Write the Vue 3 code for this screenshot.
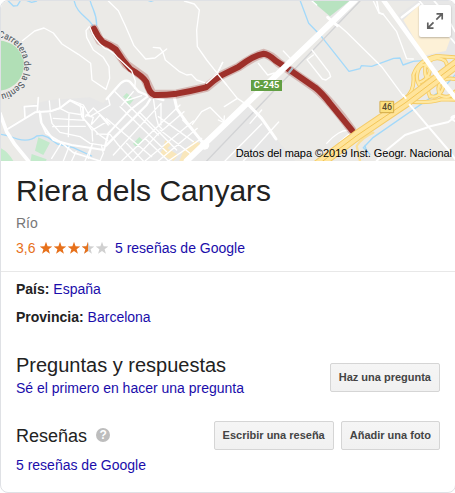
<script setup>
const starPath = 'M7 .8 8.6 5.3 13.3 5.4 9.6 8.3 10.9 12.8 7 10.1 3.1 12.8 4.4 8.3 .7 5.4 5.4 5.3Z'
const stars = [1, 1, 1, 0.5, 0]
const facts = [
  { label: 'País', value: 'España' },
  { label: 'Provincia', value: 'Barcelona' },
]
</script>

<template>
  <article class="card">
    <div class="map">
      <svg class="tiles" viewBox="0 0 1365 483" width="455" height="161" fill="none" stroke-linecap="round" stroke-linejoin="round">
        <rect width="1365" height="483" fill="#ebeae7" />
        <!-- built-up areas -->
        <g fill="#e7e7e7">
          <path d="M0 395 75 350 65 320 150 300 270 292 310 310 350 270 375 240 410 275 460 290 525 292 535 340 615 435 560 483H90L20 410Z" />
          <path d="M745 315 830 418 885 483H560L615 435Z" />
          <path d="M1195 45 1257 0H1365V165L1270 180Z" />
          <path d="M1015 75 935 0H1070Z" />
        </g>
        <path d="M0 122C40 125 70 155 72 190C74 232 42 268 0 272Z" fill="#b1dfb6" />
        <path d="M932 0H1052L990 49Z" fill="#b8e3c0" />
        <path d="M115 412 150 428 130 465 105 452ZM95 462 140 478 138 483H92ZM380 279 391 288 381 300 369 290ZM391 289 401 299 388 315 376 303ZM418 411 428 421 408 441 399 431ZM0 443Q25 455 40 483H0Z" fill="#c3eacb" />
        <path d="M1210 60 1257 15 1353 110 1338 152 1273 167Z" fill="#fdf1d7" />
        <path d="M495 421 515 433 502 445 535 465 520 483 480 462 490 443ZM585 422 610 435 560 483H538L550 453Z" fill="#f9e7bc" />

        <!-- streams -->
        <g stroke="#a3d9fa" stroke-width="4">
          <path d="M222 0C229 43 269 53 280 80M270 0C277 30 290 38 290 75" />
          <path d="M25 3 40 18 52 17 60 4M81 2 95 7 110 3M440 0 453 4 465 0" />
          <path d="M3 403 28 408Q82 433 110 408L127 406 144 412 172 432 220 443 275 468" />
          <path d="M901 3 926 70 964 109 1047 214 1080 206 1084 197 1115 199 1181 175 1200 174 1209 195 1240 184 1275 181M1365 225 1325 270 1120 412 1090 443 1110 463M1095 436 1100 455" />
        </g>

        <!-- railway -->
        <path d="M1080 3 620 483" stroke="#d2d3d5" stroke-width="4" />

        <!-- minor streets -->
        <g stroke="#fff" stroke-width="4">
          <path d="M67 122 104 93 132 84 160 99 186 132 235 163 272 190 276 240 318 268 329 235 327 200 310 172 280 150 260 112 258 92 268 80" />
          <path d="M325 3 355 32 375 75 402 137 437 177 465 174 500 147M460 142 480 144 489 157 496 180 539 215 560 225 574 223 590 240 620 250 640 242 668 187" />
          <path d="M553 3 583 12 598 30 590 90 592 140 620 180 652 220 712 295 739 313M650 220 620 250M712 295 673 320M850 153 880 185M1015 75 1040 97 1145 200 1215 295M933 0 950 15M1120 3 1137 39 1150 43 1190 95 1220 176 1240 177" />
          <path d="M775 190 803 225 823 219M940 165 921 179 967 237 978 240 992 230 988 218 936 150M577 373 605 335 630 322 672 364 673 348M672 368 655 360" />
          <path d="M115 293 112 333M118 333 122 365 138 400 180 425 220 458 300 483M75 353 73 320 112 317" stroke-width="5" />
          <path d="M148 303 151 335 180 325 212 300 250 315 270 350 330 315 325 294M150 340 156 370 180 397 240 410 270 430 315 437M178 297 180 325 205 338 250 345M160 355 205 358 255 361 276 391 326 362M158 380 175 379 256 379M207 342 205 410M240 310 245 350 295 402 323 422M276 391 278 423M256 350 280 324 330 372M258 345 280 352 274 372M275 373 300 345 325 375M290 402 330 403M255 483 277 432M330 403 355 435 400 483M304 435 310 460 300 483M278 430 265 475M185 427 155 475M207 440 190 483M228 455 215 483" />
          <path d="M345 275 475 405M400 275 365 316M320 356 350 382 400 424 455 470M376 303 425 287M340 465 483 310M365 483 540 315M398 483 475 401 552 335M435 483 580 363M475 483 592 385M505 483 605 415M475 350 580 425M480 390 570 460M435 415 505 483M548 360 595 410M380 430 430 483M420 338 530 450M360 320 500 455M460 295 468 350 475 375 487 388M483 310 483 375" />
          <path d="M836 366 730 483M785 330 750 370M785 372 675 483M1050 392C1030 385 1000 407 980 430M1020 425 1055 396" />
        </g>
        <g stroke="#fff">
          <path d="M0 340 20 395 45 434 85 483" stroke-width="11" />
          <path d="M18 390 105 337 150 334 180 324 210 301 249 322 250 358M120 335 125 370 160 420 215 435 312 450 325 400 353 370 390 330 442 290" stroke-width="6" />
          <path d="M320 297 355 257Q374 235 390 245L416 275 446 288 490 300M318 437 440 315 455 290 523 291" stroke-width="7" />
          <path d="M523 292 531 327 558 365 614 435M742 311 785 355 828 417" stroke-width="9" />
        </g>

        <!-- river highlight -->
        <g stroke="#9c2f29">
          <path d="M282 86 300 122 345 145 379 194 433 233 457 283 530 282 620 262 664 226 715 201Q762 168 791 160Q813 165 835 188L865 208 946 264Q990 301 1056 391" stroke-opacity=".27" stroke-width="27" />
          <path d="M282 86Q293 111 309 127Q333 137 348 149Q365 179 391 207Q428 228 439 246Q447 279 463 285Q492 286 530 281Q575 273 618 262Q641 240 664 226L715 201Q762 165 791 161Q804 161 827 182L865 207 946 263Q967 280 990 310L1056 391" stroke="#9e302a" stroke-width="18" />
        </g>
        <path d="M270 82Q281 119 314 145Q332 148 355 175L395 212 406 243 404 265M620 250 652 221 668 187M652 221 680 255" stroke="#fff" stroke-width="4" />
        <path d="M866 219 878 204" stroke="#a9bbc7" stroke-width="7" stroke-linecap="butt" />

        <!-- main roads -->
        <path d="M1065 0 560 483" stroke="#fff" stroke-width="18" />
        <circle cx="614" cy="435" r="14" fill="#fff" />
        <path d="M983 52 1012 77" stroke="#fff" stroke-width="9" />
        <path d="M1130 0 1137 38 1150 43M1256 0 1365 130M1300 0 1335 40 1365 95" stroke="#fff" stroke-width="5" />
        <path d="M1205 52 1257 12" stroke="#fff" stroke-width="7" />

        <g stroke="#f5ca61" stroke-width="12">
          <path d="M1215 295Q1245 275 1240 225Q1255 180 1310 168L1365 172M1262 260C1242 238 1252 195 1274 194C1302 202 1287 237 1260 247M1280 235C1260 187 1305 162 1335 182C1358 215 1315 238 1288 232M1220 305Q1285 310 1325 298L1365 299M1290 290C1275 260 1292 232 1318 238C1345 252 1320 297 1295 289M1320 286C1305 250 1328 231 1365 237M1325 288Q1350 297 1365 275" />
        </g>
        <g stroke="#ffe8a2" stroke-width="7">
          <path d="M1215 295Q1245 275 1240 225Q1255 180 1310 168L1365 172M1262 260C1242 238 1252 195 1274 194C1302 202 1287 237 1260 247M1280 235C1260 187 1305 162 1335 182C1358 215 1315 238 1288 232M1220 305Q1285 310 1325 298L1365 299M1290 290C1275 260 1292 232 1318 238C1345 252 1320 297 1295 289M1320 286C1305 250 1328 231 1365 237M1325 288Q1350 297 1365 275" />
        </g>
        <path d="M1120 398Q1085 413 1070 438L1080 483" stroke="#fae09a" stroke-width="7" />
        <path d="M950 497 1070 407 1215 309 1375 188" stroke="#f5cc68" stroke-width="32" />
        <path d="M950 497 1070 407 1215 309 1375 188" stroke="#ffe49b" stroke-width="26" />
        <path d="M950 497 1070 407 1215 309 1375 188" stroke="#f3c556" stroke-width="3" />
        <path d="M1150 0 1310 223M1315 230 1365 292" stroke="#fff" stroke-width="14" />
        <path d="M1210 285 1217 294M1229 314 1285 380 1345 450 1370 483M1285 380 1345 366 1365 350M1286 381 1215 405 1160 450 1130 483M1365 347Q1343 352 1365 363" stroke="#fff" stroke-width="6" />

        <!-- road shields -->
        <rect x="753" y="240" width="93" height="33" fill="#629f43" />
        <text class="shield" x="761" y="265" fill="#fff" font-size="27" font-weight="700" textLength="77" lengthAdjust="spacingAndGlyphs">C-245</text>
        <rect x="1141" y="304" width="40" height="34" fill="#fce07e" stroke="#d4aa48" stroke-width="3" />
        <text class="shield" x="1146" y="331" fill="#594b31" font-size="27" font-weight="500" textLength="30" lengthAdjust="spacingAndGlyphs">46</text>

        <path id="street" d="M-6 112C40 119 72 154 72 199C72 244 42 276 -10 286" />
        <text class="street" font-size="29" font-weight="500"><textPath href="#street" textLength="246" lengthAdjust="spacingAndGlyphs">Carretera de la Sentiu</textPath></text>
      </svg>
      <span class="credit">Datos del mapa ©2019 Inst. Geogr. Nacional</span>
      <button class="expand" type="button" aria-label="Ampliar mapa">
        <svg viewBox="0 0 32 32" width="32" height="32" fill="none" stroke="#616161" stroke-width="1.7">
          <path d="M17.5 8.8H23.2V14.5M22.8 9.2 17.3 14.7M14.5 17.3 9 22.8M8.8 17.5V23.2H14.5" />
        </svg>
      </button>
    </div>

    <header class="head">
      <h1>Riera dels Canyars</h1>
      <div class="kind">Río</div>
      <div class="rating">
        <span class="score">3,6</span>
        <span class="stars">
          <svg v-for="(fill, i) in stars" :key="i" viewBox="0 0 14 14" width="14" height="14">
            <path :d="starPath" :fill="fill === 1 ? '#e7711b' : '#d0d0d0'" />
            <path v-if="fill === 0.5" d="M7 .8V10.1L3.1 12.8 4.4 8.3 .7 5.4 5.4 5.3Z" fill="#e7711b" />
          </svg>
        </span>
        <a>5 reseñas de Google</a>
      </div>
    </header>

    <section class="facts">
      <div v-for="fact in facts" :key="fact.label"><b>{{ fact.label }}:</b> <a>{{ fact.value }}</a></div>
    </section>

    <section class="row questions">
      <div>
        <h2>Preguntas y respuestas</h2>
        <a>Sé el primero en hacer una pregunta</a>
      </div>
      <button class="btn" type="button">Haz una pregunta</button>
    </section>

    <section class="row reviews">
      <div class="heading">
        <h2>Reseñas</h2>
        <span class="help">?</span>
      </div>
      <div class="actions">
        <button class="btn" type="button">Escribir una reseña</button>
        <button class="btn" type="button">Añadir una foto</button>
      </div>
    </section>
    <a class="all">5 reseñas de Google</a>
  </article>
</template>

<style>
body { background: #fff; overflow: hidden; }
</style>

<style scoped>
.card {
  box-sizing: border-box;
  width: 456px;
  height: 493px;
  border: 1px solid #dfe1e5;
  border-radius: 8px;
  overflow: hidden;
  background: #fff;
  color: #222;
  font: 14px/18px "Liberation Sans", Arial, sans-serif;
}
a { color: #1a0dab; }
h1, h2 { margin: 0; font-weight: 400; }
.map { position: relative; height: 160px; overflow: hidden; }
.tiles { display: block; margin: -1px 0 0 -1px; }
.shield, .street { font-family: Roboto, sans-serif; }
.street { fill: #62676c; stroke: #f4f5f3; stroke-width: 3px; paint-order: stroke; }
.credit { position: absolute; right: 3px; bottom: 1px; color: #000; font-size: 11px; line-height: 14px; letter-spacing: -.05px; white-space: nowrap; }
.expand {
  position: absolute;
  top: 4px;
  right: 4px;
  width: 32px;
  height: 32px;
  padding: 0;
  border: 0;
  border-radius: 2px;
  background: #fff;
  box-shadow: 0 1px 2px rgba(0, 0, 0, .25);
}
.expand svg { display: block; }
.head { box-sizing: border-box; height: 111px; padding: 12px 15px 0; border-bottom: 1px solid #e8e8e8; }
h1 { font-size: 30px; line-height: 36px; }
.kind { margin-top: 5px; color: #777; }
.rating { display: flex; align-items: center; margin-top: 7px; }
.score { width: 23px; color: #e7711b; }
.stars { display: flex; width: 76px; }
.facts { padding: 7px 15px 0; line-height: 20px; }
.facts div + div { margin-top: 8px; }
.row { display: flex; justify-content: space-between; padding: 0 15px; }
h2 { font-size: 20px; line-height: 24px; }
.questions { margin-top: 26px; }
.questions a { display: block; margin-top: 1px; line-height: 20px; }
.questions .btn { margin-top: 10px; }
.reviews { margin-top: 23px; align-items: center; }
.heading { display: flex; align-items: center; gap: 9px; }
.reviews h2 { font-size: 18px; }
.help {
  width: 14px;
  height: 14px;
  margin-top: -2px;
  border-radius: 50%;
  background: #bdbdbd;
  color: #fff;
  font: 700 12px/14px "Liberation Sans", Arial, sans-serif;
  text-align: center;
}
.actions { display: flex; gap: 7px; }
.btn {
  box-sizing: border-box;
  height: 29px;
  padding: 0 8px;
  border: 1px solid #d5d5d5;
  border-radius: 2px;
  background: linear-gradient(#f5f5f5, #f1f1f1);
  color: #444;
  font: 700 11px/27px "Liberation Sans", Arial, sans-serif;
  white-space: nowrap;
}
.all { display: block; margin: 5px 15px 0; line-height: 20px; }
</style>
